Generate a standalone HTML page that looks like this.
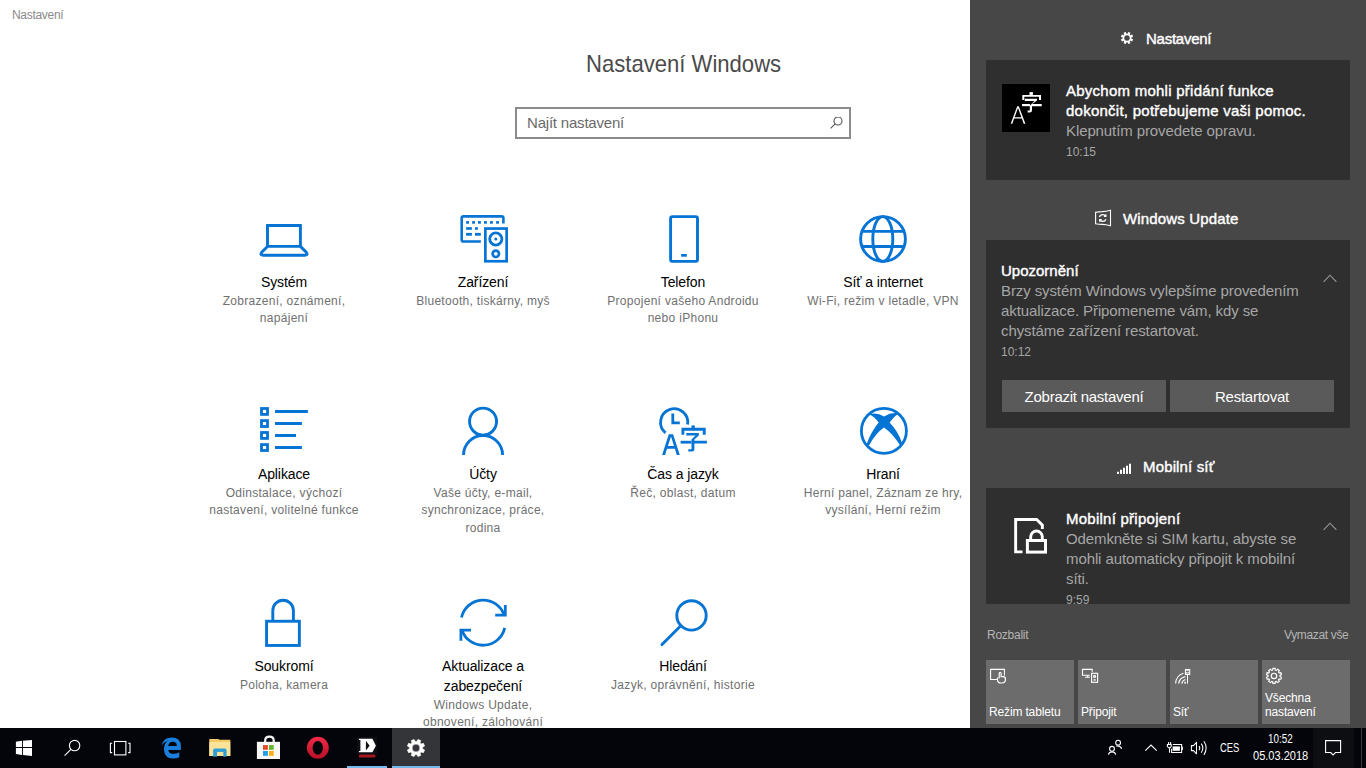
<!DOCTYPE html>
<html><head><meta charset="utf-8">
<style>
*{margin:0;padding:0;box-sizing:border-box}
html,body{width:1366px;height:768px;overflow:hidden;background:#fff;font-family:"Liberation Sans",sans-serif;-webkit-font-smoothing:antialiased}
.a{position:absolute;white-space:nowrap}
#apptitle{left:12px;top:7px;font-size:12px;line-height:16px;color:#8a8a8a;letter-spacing:-0.3px}
#h1{left:586px;top:50px;font-size:24px;line-height:28px;color:#4a4a4a;transform:scaleX(0.92);transform-origin:0 0}
#search{left:515px;top:107px;width:336px;height:32px;border:2px solid #8c8c8c}
#search span{position:absolute;left:10px;top:4px;font-size:15px;line-height:20px;color:#6a6a6a;letter-spacing:-0.2px}
.tile{position:absolute;width:200px;text-align:center}
.tile .t{position:absolute;left:0;width:200px;font-size:14px;line-height:20px;color:#000;white-space:nowrap;letter-spacing:-0.1px;margin-top:0.4px}
.tile .s{position:absolute;left:0;width:200px;font-size:12px;line-height:17.4px;color:#707070;white-space:nowrap;letter-spacing:0.3px}
.tile svg{position:absolute}
.ic{position:absolute;z-index:5}
#ac{left:970px;top:0;width:396px;height:728px;background:#474747}
.hdr{position:absolute;color:#fff;font-size:15px;line-height:20px;-webkit-text-stroke:0.4px #fff;letter-spacing:0.15px;white-space:nowrap;margin-top:1px}
.card{position:absolute;left:986px;width:364px;background:#2f2f2f;overflow:hidden}
.card .ti{position:absolute;color:#fff;font-size:15px;line-height:20px;white-space:nowrap;-webkit-text-stroke:0.4px #fff;letter-spacing:0.25px}
.card .bd{position:absolute;color:#a6a6a6;font-size:15px;line-height:20px;white-space:nowrap;letter-spacing:-0.1px}
.card .tm{position:absolute;color:#a6a6a6;font-size:12px;line-height:16px;white-space:nowrap}
.card .ti,.card .bd,.card .tm{margin-top:1px}
.btn{position:absolute;background:#5a5a5a;color:#fff;font-size:15px;line-height:33px;height:32px;text-align:center;letter-spacing:-0.25px}
.qa{position:absolute;top:660px;width:88px;height:64px;background:#6c6c6c}
.qa span{position:absolute;left:3px;color:#fff;font-size:12px;line-height:16px;white-space:nowrap;letter-spacing:-0.15px}
#tb{left:0;top:728px;width:1366px;height:40px;background:#03050a}
.tbt{position:absolute;color:#fff;font-size:12px;line-height:16px;white-space:nowrap}
</style></head><body>
<div class="a" id="apptitle">Nastavení</div>
<div class="a" id="h1">Nastavení Windows</div>
<div class="a" id="search"><span>Najít nastavení</span>
<svg style="position:absolute;left:313px;top:8px" width="16" height="16" viewBox="0 0 16 16"><circle cx="8" cy="4" r="4" fill="none" stroke="#555" stroke-width="1.1"/><path d="M5.2 6.8 L0.6 11.4" stroke="#555" stroke-width="1.1"/></svg>
</div>

<!-- tiles row 1 -->
<div class="tile" style="left:184px;top:200px">
 <div class="t" style="top:72px">Systém</div>
 <div class="s" style="top:93px">Zobrazení, oznámení,<br>napájení</div>
</div>
<div class="tile" style="left:383px;top:200px">
 <div class="t" style="top:72px">Zařízení</div>
 <div class="s" style="top:93px">Bluetooth, tiskárny, myš</div>
</div>
<div class="tile" style="left:583px;top:200px">
 <div class="t" style="top:72px">Telefon</div>
 <div class="s" style="top:93px">Propojení vašeho Androidu<br>nebo iPhonu</div>
</div>
<div class="tile" style="left:783px;top:200px">
 <div class="t" style="top:72px">Síť a internet</div>
 <div class="s" style="top:93px">Wi-Fi, režim v letadle, VPN</div>
</div>
<!-- row 2 -->
<div class="tile" style="left:184px;top:392px">
 <div class="t" style="top:72px">Aplikace</div>
 <div class="s" style="top:93px">Odinstalace, výchozí<br>nastavení, volitelné funkce</div>
</div>
<div class="tile" style="left:383px;top:392px">
 <div class="t" style="top:72px">Účty</div>
 <div class="s" style="top:93px">Vaše účty, e-mail,<br>synchronizace, práce,<br>rodina</div>
</div>
<div class="tile" style="left:583px;top:392px">
 <div class="t" style="top:72px">Čas a jazyk</div>
 <div class="s" style="top:93px">Řeč, oblast, datum</div>
</div>
<div class="tile" style="left:783px;top:392px">
 <div class="t" style="top:72px">Hraní</div>
 <div class="s" style="top:93px">Herní panel, Záznam ze hry,<br>vysílání, Herní režim</div>
</div>
<!-- row 3 -->
<div class="tile" style="left:184px;top:584px">
 <div class="t" style="top:72px">Soukromí</div>
 <div class="s" style="top:93px">Poloha, kamera</div>
</div>
<div class="tile" style="left:383px;top:584px">
 <div class="t" style="top:72px">Aktualizace a<br>zabezpečení</div>
 <div class="s" style="top:113px">Windows Update,<br>obnovení, zálohování</div>
</div>
<div class="tile" style="left:583px;top:584px">
 <div class="t" style="top:72px">Hledání</div>
 <div class="s" style="top:93px">Jazyk, oprávnění, historie</div>
</div>


<svg class="ic" style="left:256px;top:218px" width="56" height="44" viewBox="0 0 56 44" fill="none" stroke="#0574d4" stroke-width="2.9">
<path d="M11.5 28.4V7.5H44.4V28.4"/><path d="M11.5 28.4H44.4L50.3 34.3Q52.4 37.3 48.5 37.3H7.5Q3.6 37.3 5.7 34.3Z" stroke-linejoin="round"/></svg>
<svg class="ic" style="left:455px;top:210px" width="60" height="56" viewBox="0 0 60 56" fill="#0574d4" stroke="none">
<path d="M25.8 31.5H8.5Q6.7 31.5 6.7 29.7V8.2Q6.7 6.4 8.5 6.4H46.6Q48.4 6.4 48.4 8.2V13.6" fill="none" stroke="#0574d4" stroke-width="2.6"/>
<rect x="11.1" y="11.1" width="2.9" height="2.6"/><rect x="17.1" y="11.1" width="2.9" height="2.6"/><rect x="23" y="11.1" width="2.9" height="2.6"/><rect x="29" y="11.1" width="2.9" height="2.6"/><rect x="35" y="11.1" width="2.9" height="2.6"/><rect x="41.1" y="11.1" width="2.9" height="2.6"/>
<rect x="11.1" y="17.2" width="5.8" height="2.6"/><rect x="20" y="17.2" width="2.9" height="2.6"/>
<rect x="11.1" y="22.9" width="5.8" height="2.8"/><rect x="20" y="22.9" width="5.8" height="2.8"/>
<rect x="30.35" y="18.55" width="21.3" height="32.7" fill="none" stroke="#0574d4" stroke-width="2.7"/>
<circle cx="40.8" cy="29" r="6.1" fill="none" stroke="#0574d4" stroke-width="2.8"/><circle cx="40.8" cy="29" r="1.5"/>
<circle cx="40.8" cy="43.8" r="3.2" fill="none" stroke="#0574d4" stroke-width="2.6"/>
</svg>
<svg class="ic" style="left:660px;top:208px" width="46" height="58" viewBox="0 0 46 58" fill="#0574d4">
<rect x="10.6" y="8.6" width="26.9" height="44.8" rx="1.8" fill="none" stroke="#0574d4" stroke-width="2.9"/>
<rect x="21.1" y="46" width="5.7" height="2.7"/></svg>
<svg class="ic" style="left:852px;top:208px" width="62" height="58" viewBox="0 0 62 58" fill="none" stroke="#0574d4" stroke-width="2.9">
<circle cx="31" cy="31" r="22.4"/><ellipse cx="30.8" cy="31" rx="10" ry="22.4"/><path d="M9.5 23.4H52.5M9.5 38.5H52.5"/></svg>

<svg class="ic" style="left:252px;top:400px" width="62" height="62" viewBox="0 0 62 62" fill="none" stroke="#0574d4">
<g stroke-width="2.8"><rect x="9.5" y="8.5" width="6" height="5.9"/><rect x="9.5" y="20.6" width="6" height="5.9"/><rect x="9.5" y="32.5" width="6" height="5.9"/><rect x="9.5" y="44.6" width="6" height="5.9"/></g>
<path d="M23 11.4H55.9M23 23.4H49.9M23 35.4H44M23 47.4H49.9" stroke-width="3"/></svg>
<svg class="ic" style="left:452px;top:400px" width="62" height="62" viewBox="0 0 62 62" fill="none" stroke="#0574d4" stroke-width="2.9">
<circle cx="31.05" cy="21.6" r="13.5"/><path d="M11.5 55A19.55 19.55 0 0 1 50.6 55"/></svg>
<svg class="ic" style="left:652px;top:400px" width="62" height="62" viewBox="0 0 62 62" fill="#0574d4" stroke="none">
<path d="M13.5 32.8A13.6 13.6 0 1 1 35.6 24.6" fill="none" stroke="#0574d4" stroke-width="2.8"/>
<path d="M20.8 13.4V22.8H27.8" fill="none" stroke="#0574d4" stroke-width="2.8"/>
<path d="M16.8 34.3H21.1L27.8 54.9H24.8L22.9 48.8H15L13.1 54.9H10.1ZM15.9 46H22L19 36.6Z"/>
<rect x="39.5" y="25.4" width="3.3" height="2.6"/>
<path d="M29.5 27.8H53.7V34.7H50.8V30.7H32.3V34.7H29.5Z"/>
<path d="M34.3 33H46.8V35.5L42.4 39.6V40.8H54.9V43.6H42.4V49.2Q42.4 51.6 40 51.6H36.3V49.2H39.5V39.4L43.5 35.5H34.3Z"/>
<path d="M28.6 40.8H39.5V43.6H28.6Z"/>
</svg>
<svg class="ic" style="left:852px;top:400px" width="62" height="62" viewBox="0 0 62 62" fill="#0574d4">
<circle cx="31.9" cy="30.9" r="22.5" fill="none" stroke="#0574d4" stroke-width="2.8"/>
<path d="M17 14.3Q25 12 32 16.4Q39 12 46.8 13.3Q41.2 17 37.6 22.6Q45.8 31 50.2 43.2L48.2 45.6Q41 33.5 32 27.4Q23 33.5 16.6 46.3L14.6 44.2Q19 32 26.6 22.6Q23 17 17 14.3Z"/></svg>

<svg class="ic" style="left:252px;top:592px" width="62" height="62" viewBox="0 0 62 62" fill="none" stroke="#0574d4" stroke-width="2.9">
<rect x="14.55" y="29.25" width="32.8" height="24.2"/><path d="M20.8 29.2V18.6A10.3 10.3 0 0 1 41.4 18.6V29.2"/></svg>
<svg class="ic" style="left:452px;top:592px" width="62" height="62" viewBox="0 0 62 62" fill="none" stroke="#0574d4" stroke-width="2.8">
<path d="M9.5 25.56A22.2 22.2 0 0 1 52.2 23.2"/><path d="M53.3 12.9V23.2H43.2"/>
<path d="M52.7 35.84A22.2 22.2 0 0 1 10 38.2"/><path d="M8.9 48.8V38.2H19"/></svg>
<svg class="ic" style="left:652px;top:592px" width="62" height="62" viewBox="0 0 62 62" fill="none" stroke="#0574d4" stroke-width="2.9">
<circle cx="39.5" cy="23.4" r="14.7"/><path d="M28.3 34.2L10 52.6" stroke-linecap="round"/></svg>

<!-- action center -->
<div class="a" id="ac"></div>

<svg class="ic" style="left:1119px;top:30px" width="16" height="16" viewBox="0 0 16 16"><path fill="#fff" fill-rule="evenodd" d="M8.25 3.91 L9.24 1.92 L11.42 2.83 L10.72 4.93 L11.07 5.28 L13.17 4.58 L14.08 6.76 L12.09 7.75 L12.09 8.25 L14.08 9.24 L13.17 11.42 L11.07 10.72 L10.72 11.07 L11.42 13.17 L9.24 14.08 L8.25 12.09 L7.75 12.09 L6.76 14.08 L4.58 13.17 L5.28 11.07 L4.93 10.72 L2.83 11.42 L1.92 9.24 L3.91 8.25 L3.91 7.75 L1.92 6.76 L2.83 4.58 L4.93 5.28 L5.28 4.93 L4.58 2.83 L6.76 1.92 L7.75 3.91Z M8 5.3A2.7 2.7 0 1 0 8 10.7A2.7 2.7 0 1 0 8 5.3Z"/></svg>
<svg class="ic" style="left:1002px;top:84px" width="48" height="48" viewBox="0 0 48 48"><rect width="48" height="48" fill="#000"/>
<g fill="#fff"><path d="M15.2 22.2H16.8L23.4 39.7H21.7L19.9 34.6H12.1L10.3 39.7H8.7ZM12.6 33.2H19.4L16 23.9Z"/>
<rect x="27.5" y="8.1" width="3.4" height="2.8"/><path d="M20.3 10.9H39V15.9H37V12.8H22.3V15.9H20.3Z"/>
<path d="M22.8 14.7H35V16.5L30 20V20H39.7V22.2H30V26.2Q30 28.4 27.8 28.4H25.6V26.4H27.8V21.8L32.4 16.9H22.8Z"/><rect x="20" y="20" width="8" height="2.2"/></g></svg>
<svg class="ic" style="left:1090px;top:205px" width="26" height="26" viewBox="0 0 26 26" fill="none" stroke="#fff" stroke-width="1.1">
<path d="M5.6 7.2Q9 6.6 12 6.6Q16 6.4 20.5 5.2V20.7Q16 19.5 12 19.4Q9 19.3 5.6 18.8Z"/>
<path d="M9.4 12Q10.2 9.6 12.8 9.6Q14.6 9.6 15.6 10.9M15.9 9.3V11.4H13.9M16 14.2Q15.2 16.4 12.8 16.4Q11 16.4 10 15.1M9.7 16.7V14.6H11.7" stroke-width="1.2"/></svg>
<svg class="ic" style="left:1112px;top:458px" width="24" height="22" viewBox="0 0 24 22" fill="#fff">
<rect x="5" y="13.75" width="2" height="2.15"/><rect x="8" y="11.75" width="2" height="4.15"/><rect x="11" y="9.75" width="2" height="6.15"/><rect x="14" y="7.7" width="2" height="8.2"/><rect x="17" y="5.7" width="2" height="10.2"/></svg>
<svg class="ic" style="left:1008px;top:510px" width="44" height="50" viewBox="0 0 44 50" fill="none" stroke="#fff" stroke-width="2.9">
<path d="M14.5 41.85H7.65V9.45H28.7L34.35 15.1V19"/><rect x="19.4" y="30.5" width="18.1" height="11.6" stroke-width="3"/><path d="M22.7 30.5V26.8A5.8 5.8 0 0 1 34.3 26.8V30.5"/></svg>
<svg class="ic" style="left:1320px;top:270px" width="20" height="16" viewBox="0 0 20 16" fill="none" stroke="#9a9a9a" stroke-width="1.1"><path d="M3.6 11.8L10 5.2L16.4 11.8"/></svg>
<svg class="ic" style="left:1320px;top:518px" width="20" height="16" viewBox="0 0 20 16" fill="none" stroke="#9a9a9a" stroke-width="1.1"><path d="M3.6 11.8L10 5.2L16.4 11.8"/></svg>
<div class="hdr" style="left:1146px;top:28px;letter-spacing:-0.25px">Nastavení</div>
<div class="card" style="top:60px;height:120px">
  <div class="ti" style="left:80px;top:20px">Abychom mohli přidání funkce</div>
 <div class="ti" style="left:80px;top:40px">dokončit, potřebujeme vaši pomoc.</div>
 <div class="bd" style="left:80px;top:60px">Klepnutím provedete opravu.</div>
 <div class="tm" style="left:80px;top:83px">10:15</div>
</div>
<div class="hdr" style="left:1123px;top:208px">Windows Update</div>
<div class="card" style="top:240px;height:188px">
 <div class="ti" style="left:15px;top:20px;letter-spacing:0">Upozornění</div>
 <div class="bd" style="left:15px;top:40px">Brzy systém Windows vylepšíme provedením</div>
 <div class="bd" style="left:15px;top:60px">aktualizace. Připomeneme vám, kdy se</div>
 <div class="bd" style="left:15px;top:80px">chystáme zařízení restartovat.</div>
 <div class="tm" style="left:15px;top:103px">10:12</div>
 <div class="btn" style="left:16px;top:140px;width:164px">Zobrazit nastavení</div>
 <div class="btn" style="left:184px;top:140px;width:164px">Restartovat</div>
</div>
<div class="hdr" style="left:1143px;top:456px">Mobilní síť</div>
<div class="card" style="top:488px;height:116px">
 <div class="ti" style="left:80px;top:20px">Mobilní připojení</div>
 <div class="bd" style="left:80px;top:40px">Odemkněte si SIM kartu, abyste se</div>
 <div class="bd" style="left:80px;top:60px">mohli automaticky připojit k mobilní</div>
 <div class="bd" style="left:80px;top:80px">síti.</div>
 <div class="tm" style="left:80px;top:103px">9:59</div>
</div>
<div class="a" style="left:987px;top:627px;font-size:12px;line-height:16px;color:#b4b4b4;letter-spacing:-0.25px">Rozbalit</div>
<div class="a" style="left:1284px;top:627px;font-size:12px;line-height:16px;color:#b4b4b4;letter-spacing:-0.35px">Vymazat vše</div>
<div class="qa" style="left:986px"><span style="top:44px">Režim tabletu</span></div>
<div class="qa" style="left:1078px"><span style="top:44px">Připojit</span></div>
<div class="qa" style="left:1170px"><span style="top:44px">Síť</span></div>
<div class="qa" style="left:1262px"><span style="top:30px">Všechna</span><span style="top:44px">nastavení</span></div>


<svg class="ic" style="left:986px;top:662px" width="24" height="24" viewBox="0 0 24 24" fill="none" stroke="#fff" stroke-width="1.1">
<path d="M11.5 17.5H4.6V7.4H18.4V13.6"/><path d="M13.2 16.6V11.3Q13.2 10.3 14.2 10.3Q15.1 10.3 15.1 11.3V14.6H17.3Q19.4 14.6 19.4 16.8V17.6Q19.4 21 16 21H15.2Q11.5 21 11.5 17.4V15.6" stroke-width="1.2"/></svg>
<svg class="ic" style="left:1078px;top:662px" width="24" height="24" viewBox="0 0 24 24" fill="none" stroke="#fff" stroke-width="1.15">
<path d="M11.8 13.2H4.5V7.4H14.2V9.7"/><path d="M9.7 13.4V15.2M7 15.2H12"/><rect x="13.6" y="11.3" width="6" height="9"/><circle cx="16.6" cy="14.4" r="1"/><rect x="15.5" y="17.2" width="2.2" height="1.4" fill="#fff" stroke="none"/></svg>
<svg class="ic" style="left:1170px;top:662px" width="24" height="24" viewBox="0 0 24 24" fill="none" stroke="#fff" stroke-width="1.15">
<path d="M5.6 21.6A11 11 0 0 1 13.4 11.2"/><path d="M8.7 21.6A8.2 8.2 0 0 1 15.4 14.6"/><path d="M11.8 21.6A5.2 5.2 0 0 1 15.4 17.5"/><rect x="14.3" y="19.8" width="1.6" height="1.8" fill="#fff" stroke="none"/>
<rect x="15.4" y="7.5" width="4.3" height="5" stroke-width="1.05"/><path d="M17.5 12.5V21.6M16.4 8.6H18.7M16.4 10.2V11.1H18.7V10.2" stroke-width="1"/></svg>
<svg class="ic" style="left:1262px;top:662px" width="24" height="24" viewBox="0 0 24 24" fill="none" stroke="#fff" stroke-width="1.15">
<path d="M10.65 8.05 L10.94 6.37 L13.06 6.37 L13.35 8.05 L14.34 8.38 L15.57 7.19 L17.28 8.43 L16.53 9.96 L17.14 10.81 L18.83 10.57 L19.48 12.58 L17.98 13.38 L17.98 14.42 L19.48 15.22 L18.83 17.23 L17.14 16.99 L16.53 17.84 L17.28 19.37 L15.57 20.61 L14.34 19.42 L13.35 19.75 L13.06 21.43 L10.94 21.43 L10.65 19.75 L9.66 19.42 L8.43 20.61 L6.72 19.37 L7.47 17.84 L6.86 16.99 L5.17 17.23 L4.52 15.22 L6.02 14.42 L6.02 13.38 L4.52 12.58 L5.17 10.57 L6.86 10.81 L7.47 9.96 L6.72 8.43 L8.43 7.19 L9.66 8.38Z"/><circle cx="12" cy="13.9" r="2.7"/></svg>

<!-- taskbar -->
<div class="a" id="tb"></div>
<div class="a" style="left:392px;top:728px;width:48px;height:40px;background:#333538"></div>
<div class="a" style="left:347px;top:766px;width:40px;height:2px;background:#76b9ed"></div>
<div class="a" style="left:392px;top:766px;width:48px;height:2px;background:#76b9ed"></div>

<svg class="ic" style="left:12px;top:736px" width="24" height="24" viewBox="0 0 24 24" fill="#fff">
<path d="M3.9 5.8L10 4.85V10.9H3.9Z"/><path d="M10.9 4.7L20 3.9V10.9H10.9Z"/><path d="M3.9 12H10V18.9L3.9 18Z"/><path d="M10.9 12H20V20L10.9 19.1Z"/></svg>
<svg class="ic" style="left:60px;top:736px" width="24" height="24" viewBox="0 0 24 24" fill="none" stroke="#fff" stroke-width="1.1">
<circle cx="14.6" cy="9.6" r="5.2"/><path d="M10.9 13.3L4.6 19.6"/></svg>
<svg class="ic" style="left:108px;top:736px" width="24" height="24" viewBox="0 0 24 24" fill="none" stroke="#fff" stroke-width="1.1">
<rect x="6.5" y="5.5" width="11.4" height="13.4"/><path d="M4.2 7.2H2.4V16.6H4.2M20.2 7.2H22V16.6H20.2"/></svg>
<svg class="ic" style="left:158px;top:734px" width="26" height="26" viewBox="0 0 26 26">
<path fill="#1a7fdc" fill-rule="evenodd" d="M22.9 15.9H10.3Q10.8 19.8 15.6 19.8Q18.8 19.8 21.3 18.3V23.3Q18.6 24.5 15 24.5Q6 24.5 6 15.2Q6 9.4 10.2 6.2Q5.8 8.2 3.4 11.8Q5.2 3.4 13.8 3.4Q22.9 3.4 22.9 12.4ZM10.2 11.9H18.9Q18.6 7.8 14.6 7.8Q10.9 7.8 10.2 11.9Z"/></svg>
<svg class="ic" style="left:206px;top:734px" width="28" height="28" viewBox="0 0 28 28">
<path fill="#f3ca66" d="M3.3 4.9H12.4L13.4 5.8H24.3V22H3.3Z"/><path fill="#fbe39a" d="M3.3 8H24.3V22H3.3Z"/>
<path fill="#2e9fd6" d="M7.1 22.8V16.2Q7.1 14.6 8.7 14.6H19Q20.6 14.6 20.6 16.2V22.8H17.2V17.9H11V22.8Z"/><rect x="11" y="17.9" width="6.2" height="4.1" fill="#fbdf94"/></svg>
<svg class="ic" style="left:254px;top:732px" width="30" height="30" viewBox="0 0 30 30">
<path d="M11.2 10.5V8.5Q11.2 4.6 15.4 4.6Q19.7 4.6 19.7 8.5V10.5" fill="none" stroke="#f4f4f4" stroke-width="2.2"/>
<path fill="#f7f7f7" d="M2.9 9.8H26V27H2.9Z"/>
<rect x="9" y="13.1" width="4.9" height="4.7" fill="#e4492d"/><rect x="15" y="13.1" width="4.7" height="4.7" fill="#64b32a"/><rect x="9" y="19" width="4.9" height="4.8" fill="#1ea0e8"/><rect x="15" y="19" width="4.7" height="4.8" fill="#f8b00d"/></svg>
<svg class="ic" style="left:302px;top:734px" width="30" height="28" viewBox="0 0 30 28">
<defs><linearGradient id="og" x1="0" y1="0" x2="0" y2="1"><stop offset="0" stop-color="#f22a48"/><stop offset="1" stop-color="#b80f27"/></linearGradient></defs>
<path fill="url(#og)" fill-rule="evenodd" d="M15.85 2.7A10.95 11.05 0 1 1 15.85 24.8A10.95 11.05 0 1 1 15.85 2.7ZM15.8 6.9A5.2 6.95 0 1 0 15.8 20.8A5.2 6.95 0 1 0 15.8 6.9Z"/></svg>
<svg class="ic" style="left:352px;top:734px" width="30" height="28" viewBox="0 0 30 28">
<rect x="5" y="3" width="20" height="17" fill="#0e0f12"/><path fill="#fff" fill-rule="evenodd" d="M6.9 4.7H20.4L23.9 11.7L20.4 18.2H6.9V16.9H8.4V6H6.9ZM13.9 6.8V16.6L17.6 11.8Z"/>
<rect x="6.9" y="20.6" width="16.5" height="3" rx="1.2" fill="#a8161e"/></svg>
<svg class="ic" style="left:404px;top:736px" width="24" height="24" viewBox="0 0 24 24"><path fill="#fff" fill-rule="evenodd" stroke="#fff" stroke-width="0.6" stroke-linejoin="round" d="M12.75 5.44 L13.90 3.41 L16.73 4.58 L16.11 6.83 L17.17 7.89 L19.42 7.27 L20.59 10.10 L18.56 11.25 L18.56 12.75 L20.59 13.90 L19.42 16.73 L17.17 16.11 L16.11 17.17 L16.73 19.42 L13.90 20.59 L12.75 18.56 L11.25 18.56 L10.10 20.59 L7.27 19.42 L7.89 17.17 L6.83 16.11 L4.58 16.73 L3.41 13.90 L5.44 12.75 L5.44 11.25 L3.41 10.10 L4.58 7.27 L6.83 7.89 L7.89 6.83 L7.27 4.58 L10.10 3.41 L11.25 5.44Z M12 8.1A3.9 3.9 0 1 0 12 15.9A3.9 3.9 0 1 0 12 8.1Z"/></svg>

<svg class="ic" style="left:1104px;top:736px" width="24" height="24" viewBox="0 0 24 24" fill="none" stroke="#fff" stroke-width="1.1">
<circle cx="14.1" cy="6.7" r="2.4"/><path d="M12.2 10.2A4.6 4.6 0 0 1 17.7 12.8"/><circle cx="8" cy="12.8" r="2.4"/><path d="M4.4 18.6A3.8 3.8 0 0 1 11.7 18.6"/></svg>
<svg class="ic" style="left:1140px;top:736px" width="22" height="24" viewBox="0 0 22 24" fill="none" stroke="#fff" stroke-width="1.1"><path d="M5.3 14.7L11 9L16.7 14.7"/></svg>
<svg class="ic" style="left:1162px;top:736px" width="50" height="24" viewBox="0 0 50 24" fill="none" stroke="#fff" stroke-width="1.05">
<path d="M10.8 8.4H19.6V16.5H9.6V12.8"/><rect x="20.1" y="10.6" width="0.9" height="3.5" fill="#fff" stroke="none"/><rect x="10.6" y="10.4" width="7.3" height="4.4" fill="#fff" stroke="none"/>
<path d="M6.6 6V8.2M8.6 6V8.2M5.4 8.4H9.2V10.6L7.5 12.2L5.4 10.6ZM7.5 12.2V16.8"/>
<path d="M29.4 9.6H31.5L34.5 6.3V17.8L31.5 14.6H29.4Z" stroke-linejoin="round"/>
<path d="M37 10.2Q38.6 12.1 37 14.2M39.3 7.6Q42.4 12.1 39.3 16.7M41.9 5.3Q46.4 12.1 41.9 18.9"/></svg>
<svg class="ic" style="left:1322px;top:737px" width="22" height="22" viewBox="0 0 22 22" fill="none" stroke="#fff" stroke-width="1.1"><path d="M3.6 3.6H18.6V15.5H13.5L11.1 17.9L8.7 15.5H3.6Z"/></svg>
<div class="tbt" style="left:1220px;top:740px;transform:scaleX(0.78);transform-origin:0 0">CES</div>
<div class="tbt" style="left:1268px;top:731px;transform:scaleX(0.82);transform-origin:0 0">10:52</div>
<div class="tbt" style="left:1253px;top:748px;transform:scaleX(0.92);transform-origin:0 0">05.03.2018</div>
<div class="a" style="left:1313px;top:728px;width:41px;height:40px;background:#0c0e12"></div>
<div class="a" style="left:1361px;top:728px;width:1px;height:40px;background:#3a3a3a"></div>
</body></html>
